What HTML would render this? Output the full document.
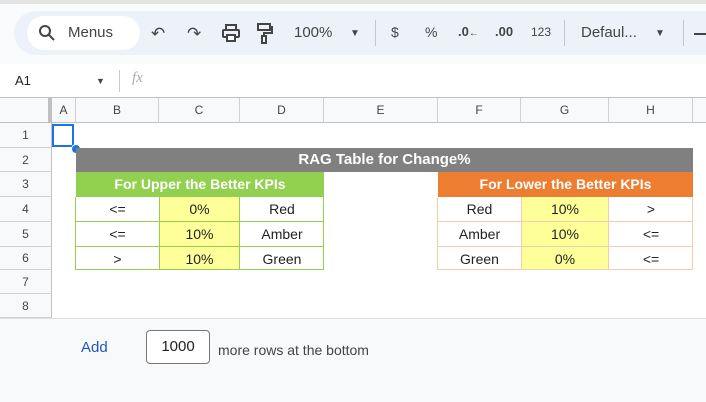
<!DOCTYPE html><html><head><style>
body{margin:0;width:706px;height:401px;overflow:hidden;font-family:"Liberation Sans",Arial,sans-serif;background:#fff;position:relative}
.a{position:absolute}
.tb{left:0;top:4px;width:706px;height:60px;background:#f9fbfd}
.pill{left:14px;top:11px;width:720px;height:44px;background:#edf2fa;border-radius:22px}
.srch{left:27px;top:16px;width:113px;height:34px;background:#fff;border-radius:17px}
.t{font-size:15px;color:#444;top:24px}
.col{top:98px;height:25px;border-right:1px solid #d0d0d0;border-bottom:1px solid #c0c0c0;background:#f8f9fa;font-size:12px;color:#444;text-align:center;line-height:25px;box-sizing:border-box}
.row{left:0;width:52px;border-bottom:1px solid #d0d0d0;border-right:1px solid #c0c0c0;background:#f8f9fa;font-size:12px;color:#444;text-align:center;box-sizing:border-box}
.c{font-size:14px;text-align:center;box-sizing:border-box;color:#222}
</style></head><body>
<div class="a" style="left:0;top:0;width:706px;height:4px;background:#e3e3e3"></div>
<div class="a tb"></div><div class="a pill"></div><div class="a srch"></div>
<svg class="a" style="left:38px;top:24px" width="18" height="18"><circle cx="7" cy="7" r="5" fill="none" stroke="#444" stroke-width="2"/><path d="M11 11l5 5" stroke="#444" stroke-width="2"/></svg>
<div class="a t" style="left:68px">Menus</div>
<div class="a t" style="left:151px;font-size:17px">↶</div>
<div class="a t" style="left:187px;font-size:17px">↷</div>
<svg class="a" style="left:221px;top:24px" width="20" height="18"><rect x="5" y="1" width="10" height="5" fill="none" stroke="#444" stroke-width="2"/><rect x="2" y="6" width="16" height="7" rx="1" fill="none" stroke="#444" stroke-width="2"/><rect x="6" y="11" width="8" height="6" fill="#fff" stroke="#444" stroke-width="2"/></svg>
<svg class="a" style="left:256px;top:22px" width="18" height="22"><rect x="2" y="2" width="12" height="6" fill="none" stroke="#444" stroke-width="2"/><path d="M14 5h2v6H8v3" fill="none" stroke="#444" stroke-width="2"/><rect x="6" y="14" width="4" height="7" fill="none" stroke="#444" stroke-width="2"/></svg>
<div class="a t" style="left:294px">100%</div>
<div class="a t" style="left:350px;font-size:10px;top:28px">▼</div>
<div class="a" style="left:375px;top:20px;width:1px;height:26px;background:#c7c7c7"></div>
<div class="a t" style="left:391px;font-size:14px">$</div>
<div class="a t" style="left:425px;font-size:14px">%</div>
<div class="a t" style="left:458px;font-size:13px;font-weight:bold">.0<span style="font-size:10px">←</span></div>
<div class="a t" style="left:495px;font-size:13px;font-weight:bold">.00</div>
<div class="a t" style="left:531px;font-size:12px;top:25px">123</div>
<div class="a" style="left:564px;top:20px;width:1px;height:26px;background:#c7c7c7"></div>
<div class="a t" style="left:581px">Defaul...</div>
<div class="a t" style="left:655px;font-size:10px;top:28px">▼</div>
<div class="a" style="left:683px;top:20px;width:1px;height:26px;background:#c7c7c7"></div>
<div class="a" style="left:694px;top:33px;width:12px;height:2px;background:#444"></div>
<div class="a" style="left:15px;top:73px;font-size:13px;color:#222">A1</div>
<div class="a" style="left:96px;top:76px;font-size:9px;color:#444">▼</div>
<div class="a" style="left:119px;top:70px;width:1px;height:22px;background:#ccc"></div>
<div class="a" style="left:132px;top:70px;font-size:15px;color:#aaa;font-style:italic;font-family:'Liberation Serif',serif">fx</div>
<div class="a" style="left:0;top:97px;width:706px;height:1px;background:#c0c0c0"></div>
<div class="a col" style="left:0;width:52px;border-right:4px solid #c0c0c0"></div>
<div class="a col" style="left:52px;width:24px">A</div>
<div class="a col" style="left:76px;width:83px">B</div>
<div class="a col" style="left:159px;width:81px">C</div>
<div class="a col" style="left:240px;width:84px">D</div>
<div class="a col" style="left:324px;width:114px">E</div>
<div class="a col" style="left:438px;width:83px">F</div>
<div class="a col" style="left:521px;width:88px">G</div>
<div class="a col" style="left:609px;width:84px">H</div>
<div class="a col" style="left:693px;width:20px"></div>
<div class="a row" style="top:123px;height:25px;line-height:25px">1</div>
<div class="a row" style="top:148px;height:24px;line-height:24px">2</div>
<div class="a row" style="top:172px;height:25px;line-height:25px">3</div>
<div class="a row" style="top:197px;height:25px;line-height:25px">4</div>
<div class="a row" style="top:222px;height:25px;line-height:25px">5</div>
<div class="a row" style="top:247px;height:23px;line-height:23px">6</div>
<div class="a row" style="top:270px;height:24px;line-height:24px">7</div>
<div class="a row" style="top:294px;height:24px;line-height:24px">8</div>
<div class="a" style="left:52px;top:124px;width:22px;height:23px;border:2px solid #1a73e8;box-sizing:border-box"></div>
<div class="a" style="left:71px;top:144px;width:8px;height:8px;border-radius:50%;background:#1a73e8;border:1px solid #fff"></div>
<div class="a c" style="left:76px;top:148px;width:617px;height:24px;line-height:24px;background:#808080;color:#fff;font-weight:bold;font-size:15px">RAG Table for Change%</div>
<div class="a c" style="left:76px;top:172px;width:248px;height:25px;line-height:25px;background:#92d050;color:#fff;font-weight:bold">For Upper the Better KPIs</div>
<div class="a c" style="left:438px;top:172px;width:255px;height:25px;line-height:25px;background:#ed7d31;color:#fff;font-weight:bold">For Lower the Better KPIs</div>
<div class="a" style="left:75px;top:197px;width:249px;height:73px;border:1px solid #92d050;border-top:0;box-sizing:border-box"></div>
<div class="a" style="left:437px;top:197px;width:256px;height:73px;border:1px solid #f8cbad;border-top:0;box-sizing:border-box"></div>
<div class="a" style="left:159px;top:197px;width:81px;height:72px;background:#ffff99;box-sizing:border-box;border-left:1px solid #92d050;border-right:1px solid #92d050"></div>
<div class="a" style="left:521px;top:197px;width:88px;height:72px;background:#ffff99;box-sizing:border-box;border-left:1px solid #f8cbad;border-right:1px solid #f8cbad"></div>
<div class="a" style="left:75px;top:221px;width:249px;height:1px;background:#92d050"></div>
<div class="a" style="left:75px;top:246px;width:249px;height:1px;background:#92d050"></div>
<div class="a" style="left:437px;top:221px;width:256px;height:1px;background:#f8cbad"></div>
<div class="a" style="left:437px;top:246px;width:256px;height:1px;background:#f8cbad"></div>
<div class="a c" style="left:76px;top:197px;width:83px;line-height:25px">&lt;=<br>&lt;=<br><span style="line-height:23px">&gt;</span></div>
<div class="a c" style="left:159px;top:197px;width:81px;line-height:25px">0%<br>10%<br>10%</div>
<div class="a c" style="left:240px;top:197px;width:84px;line-height:25px">Red<br>Amber<br>Green</div>
<div class="a c" style="left:438px;top:197px;width:83px;line-height:25px">Red<br>Amber<br>Green</div>
<div class="a c" style="left:521px;top:197px;width:88px;line-height:25px">10%<br>10%<br>0%</div>
<div class="a c" style="left:609px;top:197px;width:84px;line-height:25px">&gt;<br>&lt;=<br>&lt;=</div>
<div class="a" style="left:0;top:318px;width:706px;height:83px;background:#f8f9fa;border-top:1px solid #e0e0e0"></div>
<div class="a" style="left:81px;top:339px;font-size:15px;color:#1a56c4">Add</div>
<div class="a" style="left:146px;top:330px;width:64px;height:34px;border:1px solid #777;border-radius:4px;background:#fff;box-sizing:border-box;font-size:15px;line-height:32px;text-align:center;color:#222">1000</div>
<div class="a" style="left:218px;top:342px;font-size:14px;color:#444">more rows at the bottom</div>
</body></html>
